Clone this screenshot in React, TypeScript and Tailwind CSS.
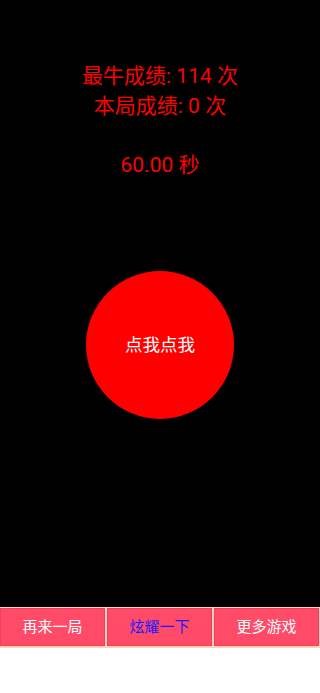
import React from 'react';

const font = { fontFamily: 'Roboto, "Noto Sans CJK SC", sans-serif' };

export default function App() {
	return (
		<div className="w-[320px] h-[693px] bg-white flex flex-col" style={font}>
			<main className="h-[607px] bg-black flex flex-col items-center">
				<div className="mt-[61px] text-[21px] leading-[30px] text-[#ff0000] text-center">
					<p>最牛成绩: 114 次</p>
					<p>本局成绩: 0 次</p>
				</div>
				<p className="mt-[29px] text-[21px] leading-[30px] text-[#ff0000]">60.00 秒</p>
				<button className="mt-[91px] w-[148px] h-[148px] rounded-full bg-[#ff0000] text-white text-[17.5px]">
					点我点我
				</button>
			</main>
			<nav className="h-[41px] bg-[#fbd4b4] pt-px pb-[2px] flex gap-[2px] pr-px">
				<button className="flex-1 border border-[#ee4058] bg-[#ff4a68] text-white text-[15px]">再来一局</button>
				<button className="flex-1 border border-[#ee4058] bg-[#ff4a68] text-[#1a1aff] text-[15px]">炫耀一下</button>
				<button className="flex-1 border border-[#ee4058] bg-[#ff4a68] text-white text-[15px]">更多游戏</button>
			</nav>
		</div>
	);
}
